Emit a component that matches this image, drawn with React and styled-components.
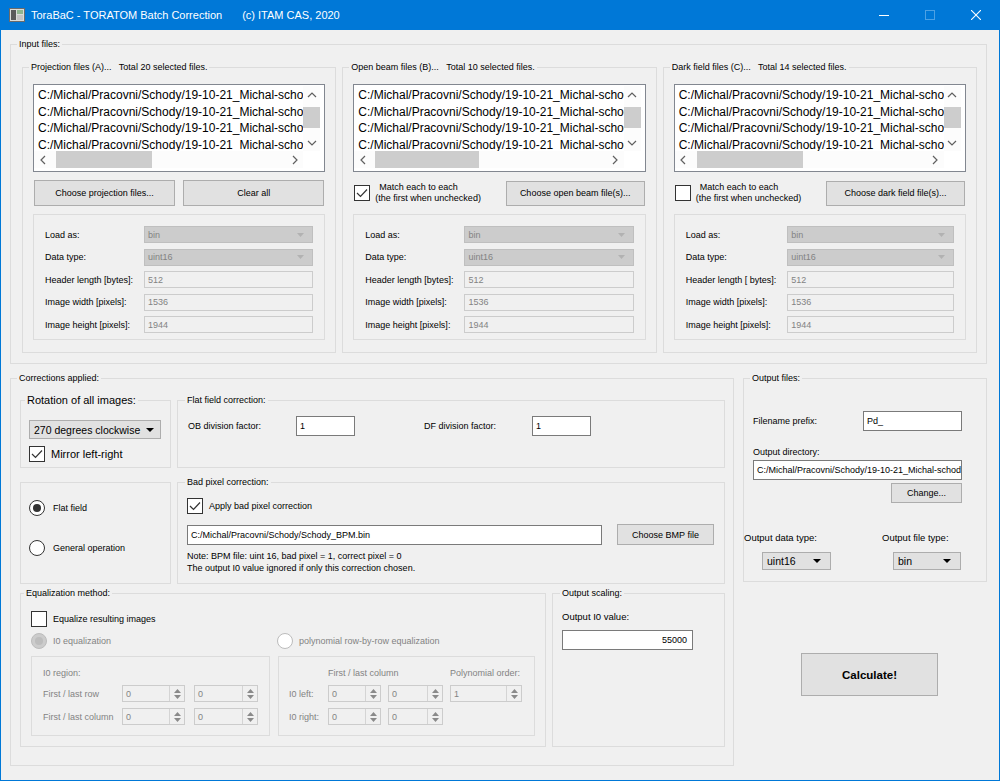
import React from 'react';
import styled, { createGlobalStyle } from 'styled-components';

const GlobalStyle = createGlobalStyle`
  html, body { margin: 0; padding: 0; background: #f0f0f0; }
  body {
    font-family: "Liberation Sans", Arial, sans-serif;
    font-size: 9px;
    line-height: 12px;
    color: #000;
  }
  *, *::before, *::after { box-sizing: border-box; }
`;

const Window = styled.div`
  width: 1000px;
  height: 781px;
  border: 1px solid #0078d7;
  border-top: none;
  background: #f0f0f0;
  display: flex;
  flex-direction: column;
  overflow: hidden;
`;

const TitleBar = styled.div`
  flex: none;
  height: 30px;
  background: #0078d7;
  color: #fff;
  display: flex;
  align-items: center;
  font-size: 11px;
  padding-left: 8px;
`;

const TitleText = styled.span`
  margin-left: ${p => p.$ml}px;
  white-space: nowrap;
`;

const CaptionButtons = styled.div`
  margin-left: auto;
  display: flex;
  align-self: stretch;
`;

const CaptionButton = styled.div`
  width: 46px;
  display: flex;
  align-items: center;
  justify-content: center;
`;

const Content = styled.div`
  padding: 8px 12px 0 9px;
  display: flex;
  flex-direction: column;
`;

const Frame = styled.fieldset`
  margin: 0;
  padding: 0;
  min-width: 0;
  border: 1px solid #dcdcdc;
  flex: ${p => p.$flex || 'none'};
  width: ${p => (p.$w ? `${p.$w}px` : 'auto')};
  display: flex;
  flex-direction: column;
`;

const Legend = styled.legend`
  margin-left: ${p => p.$x - 3}px;
  padding: 0 2px;
  font-size: ${p => p.$size || 9}px;
  line-height: ${p => p.$lh || 12}px;
  white-space: pre;
`;

const GroupBody = styled.div`
  flex: 1;
  min-width: 0;
  padding: ${p => p.$pad};
  display: flex;
  flex-direction: ${p => (p.$row ? 'row' : 'column')};
  gap: ${p => p.$gap || 0}px;
`;

const GroupBox = ({ title, titleX = 9, titleSize, titleLh, w, flex, pad, row, gap, children }) => (
  <Frame $w={w} $flex={flex}>
    <Legend $x={titleX} $size={titleSize} $lh={titleLh}>{title}</Legend>
    <GroupBody $pad={pad} $row={row} $gap={gap}>{children}</GroupBody>
  </Frame>
);

const ListBox = styled.div`
  height: 88px;
  border: 1px solid #828790;
  background: #fff;
  padding: 1px 4px 3px 0;
  display: grid;
  grid-template-columns: minmax(0, 1fr) 17px;
  grid-template-rows: minmax(0, 1fr) 17px;
`;

const ListText = styled.div`
  overflow: hidden;
  min-width: 0;
  padding: 1px 0 0 4px;
  font-size: 12px;
  line-height: 16.5px;
  white-space: nowrap;
`;

const VScroll = styled.div`
  background: #fcfcfc;
  display: flex;
  flex-direction: column;
  align-items: stretch;
`;

const HScroll = styled.div`
  background: #fcfcfc;
  display: flex;
  align-items: stretch;
`;

const ScrollArrow = styled.div`
  flex: none;
  width: 17px;
  height: 17px;
  display: flex;
  align-items: center;
  justify-content: center;
`;

const Track = styled.div`
  flex: 1;
  display: flex;
  flex-direction: ${p => (p.$vertical ? 'column' : 'row')};
`;

const Thumb = styled.div`
  background: #cdcdcd;
  flex: none;
  ${p => (p.$vertical
    ? `margin-top: ${p.$offset}px; height: ${p.$size}px;`
    : `margin-left: ${p.$offset}px; width: ${p.$size}px;`)}
`;

const Chevron = ({ dir }) => {
  const vert = dir === 'up' || dir === 'down';
  const pts = {
    up: '1,5 5,1 9,5',
    down: '1,1 5,5 9,1',
    left: '5,1 1,5 5,9',
    right: '1,1 5,5 1,9',
  }[dir];
  return (
    <svg width={vert ? 10 : 6} height={vert ? 6 : 10} viewBox={vert ? '0 0 10 6' : '0 0 6 10'}>
      <polyline points={pts} fill="none" stroke="#606060" strokeWidth="1.2" />
    </svg>
  );
};

const SubRow = styled.div`
  display: flex;
  align-items: center;
  margin-top: 8px;
  height: 26px;
  gap: 8px;
  padding: 0 1px;
`;

const PushButton = styled.div`
  height: ${p => p.$h || 26}px;
  width: ${p => (p.$w ? `${p.$w}px` : 'auto')};
  flex: ${p => (p.$w ? 'none' : '1')};
  margin-left: ${p => (p.$push ? 'auto' : `${p.$ml || 0}px`)};
  align-self: ${p => p.$self || 'auto'};
  border: 1px solid #adadad;
  background: #e1e1e1;
  display: flex;
  align-items: center;
  justify-content: center;
  font-size: ${p => p.$size || 9}px;
  font-weight: ${p => (p.$bold ? 700 : 400)};
  white-space: nowrap;
`;

const CheckBox = styled.span`
  flex: none;
  width: 16px;
  height: 16px;
  border: 1px solid #333;
  background: #fff;
  display: flex;
  align-items: center;
  justify-content: center;
`;

const Check = ({ checked }) => (
  <CheckBox>
    {checked && (
      <svg width="12" height="10" viewBox="0 0 12 10">
        <polyline points="1,5 4.5,8.5 11,1.5" fill="none" stroke="#333" strokeWidth="1.2" />
      </svg>
    )}
  </CheckBox>
);

const RadioDot = styled.span`
  flex: none;
  width: 16px;
  height: 16px;
  border-radius: 50%;
  border: 1px solid ${p => (p.$disabled ? '#bcbcbc' : '#333')};
  background: ${p => (p.$disabled && p.$checked ? '#cccccc' : '#fff')};
  display: flex;
  align-items: center;
  justify-content: center;
  &::after {
    content: '';
    display: ${p => (p.$checked ? 'block' : 'none')};
    width: 8px;
    height: 8px;
    border-radius: 50%;
    background: ${p => (p.$disabled ? '#bdbdbd' : '#333')};
  }
`;

const OptionRow = styled.div`
  display: flex;
  align-items: center;
  width: ${p => (p.$w ? `${p.$w}px` : 'auto')};
  margin-top: ${p => p.$mt || 0}px;
  color: ${p => (p.$disabled ? '#838383' : '#000')};
  font-size: ${p => p.$size || 9}px;
  white-space: nowrap;
`;

const OptionText = styled.span`
  margin-left: ${p => p.$gap || 6}px;
`;

const MatchText = styled.span`
  margin-left: -3px;
  display: flex;
  flex-direction: column;
  line-height: 11px;
  white-space: nowrap;
`;

const MatchLine = styled.span`
  padding-left: ${p => p.$indent || 0}px;
`;

const ConfigBox = styled.div`
  margin-top: 8px;
  border: 1px solid #dcdcdc;
  padding: 11px 11px 6px 11px;
  display: grid;
  grid-template-columns: auto 1fr;
  column-gap: 11px;
  row-gap: 5.5px;
  grid-auto-rows: 17px;
  align-items: center;
`;

const LineEdit = styled.div`
  flex: none;
  height: ${p => p.$h || 20}px;
  width: ${p => (p.$w ? `${p.$w}px` : 'auto')};
  margin-top: ${p => p.$mt || 0}px;
  border: 1px solid ${p => (p.$disabled ? '#cccccc' : '#7a7a7a')};
  background: ${p => (p.$disabled ? '#f0f0f0' : '#fff')};
  color: ${p => (p.$disabled ? '#838383' : '#000')};
  display: flex;
  align-items: center;
  justify-content: ${p => (p.$right ? 'flex-end' : 'flex-start')};
  padding: 0 ${p => (p.$right ? 5 : 3)}px 0 3px;
  font-size: ${p => p.$size || 9}px;
  white-space: nowrap;
  overflow: hidden;
`;

const ComboBox = styled.div`
  height: ${p => p.$h || 17}px;
  width: ${p => (p.$w ? `${p.$w}px` : 'auto')};
  margin: ${p => p.$margin || '0'};
  border: 1px solid ${p => (p.$disabled ? '#bfbfbf' : '#adadad')};
  background: ${p => (p.$disabled ? '#cccccc' : '#e1e1e1')};
  color: ${p => (p.$disabled ? '#838383' : '#000')};
  display: flex;
  align-items: center;
  padding: 0 ${p => p.$arrowGap || 8}px 0 ${p => p.$pl || 3}px;
  font-size: ${p => p.$size || 9}px;
  white-space: nowrap;
`;

const ArrowSlot = styled.span`
  margin-left: auto;
  padding-left: 4px;
  display: flex;
`;

const DropArrow = ({ color, w = 8, h = 4 }) => (
  <svg width={w} height={h} viewBox={`0 0 ${w} ${h}`}>
    <polygon points={`0,0 ${w},0 ${w / 2},${h}`} fill={color} />
  </svg>
);

const Combo = ({ value, disabled, ...rest }) => (
  <ComboBox $disabled={disabled} {...rest}>
    {value}
    <ArrowSlot>
      {disabled ? <DropArrow color="#b2b2b2" w={7} h={4} /> : <DropArrow color="#000" w={8} h={4} />}
    </ArrowSlot>
  </ComboBox>
);

const SpinBox = styled.div`
  height: 17px;
  border: 1px solid #cccccc;
  background: #f0f0f0;
  color: #838383;
  display: flex;
  align-items: center;
  padding-left: 3px;
`;

const SpinButtons = styled.div`
  margin-left: auto;
  width: 15px;
  align-self: stretch;
  border-left: 1px solid #d4d4d4;
  display: flex;
  flex-direction: column;
  align-items: center;
  justify-content: center;
  gap: 2px;
`;

const Spin = ({ value }) => (
  <SpinBox>
    {value}
    <SpinButtons>
      <svg width="7" height="4" viewBox="0 0 7 4"><polygon points="0,4 7,4 3.5,0" fill="#8a8a8a" /></svg>
      <svg width="7" height="4" viewBox="0 0 7 4"><polygon points="0,0 7,0 3.5,4" fill="#8a8a8a" /></svg>
    </SpinButtons>
  </SpinBox>
);

const BottomRow = styled.div`
  display: flex;
  align-items: flex-start;
  gap: 9px;
  margin-top: 8px;
`;

const Row = styled.div`
  display: flex;
  gap: 6px;
  margin-top: ${p => p.$mt || 0}px;
  align-items: stretch;
`;

const FactorRow = styled.div`
  display: flex;
  align-items: center;
`;

const FactorLabel = styled.span`
  width: 108px;
  margin-left: ${p => p.$ml || 0}px;
  white-space: nowrap;
`;

const RadioPanel = styled.div`
  width: 151px;
  margin-top: 6px;
  border: 1px solid #dcdcdc;
  padding: 17px 0 0 8px;
  display: flex;
  flex-direction: column;
  gap: 24px;
`;

const PathRow = styled.div`
  display: flex;
  align-items: center;
  margin-top: 10px;
`;

const Note = styled.div`
  margin-top: 5px;
  line-height: 12px;
  white-space: nowrap;
`;

const EqualBoxes = styled.div`
  display: flex;
  gap: 8px;
  margin-top: 7px;
`;

const RegionGrid = styled.div`
  flex: ${p => p.$flex || 'none'};
  width: ${p => (p.$w ? `${p.$w}px` : 'auto')};
  border: 1px solid #dcdcdc;
  padding: 10px 11px 10px ${p => p.$pl}px;
  display: grid;
  grid-template-columns: ${p => p.$cols};
  grid-template-rows: 12px 17px 17px;
  column-gap: ${p => p.$gap}px;
  row-gap: 6px;
  align-items: center;
  color: #838383;
  white-space: nowrap;
`;

const GridCell = styled.span`
  grid-column: ${p => p.$col || 'auto'};
`;

const FieldLabel = styled.div`
  margin-top: ${p => p.$mt || 0}px;
  font-size: ${p => p.$size || 9}px;
  white-space: nowrap;
`;

const PrefixRow = styled.div`
  display: flex;
  align-items: center;
`;

const PrefixLabel = styled.span`
  flex: 1;
  font-size: 9px;
`;

const TypeRow = styled.div`
  display: flex;
  margin: 29px 0 0 -9px;
`;

const TypeColumn = styled.div`
  width: ${p => (p.$w ? `${p.$w}px` : 'auto')};
  display: flex;
  flex-direction: column;
`;

const SideColumn = styled.div`
  width: 244px;
  display: flex;
  flex-direction: column;
`;

const fileLine = 'C:/Michal/Pracovni/Schody/19-10-21_Michal-schod';

const inputSets = [
  { title: 'Projection files (A)...', total: 'Total 20 selected files.', thumb: [5, 96], header: 'Header length [bytes]:', kind: 'proj' },
  { title: 'Open beam files (B)...', total: 'Total 10 selected files.', thumb: [4, 104], header: 'Header length [bytes]:', kind: 'ob', checked: true, button: 'Choose open beam file(s)...' },
  { title: 'Dark field files (C)...', total: 'Total 14 selected files.', thumb: [5, 106], header: 'Header length [ bytes]:', kind: 'df', checked: false, button: 'Choose dark field file(s)...' },
];

const AppIcon = () => (
  <svg width="16" height="14" viewBox="0 0 16 14">
    <rect x="0.5" y="0.5" width="15" height="13" fill="#d9dcd9" stroke="#6b6b6b" />
    <rect x="2" y="2" width="5" height="10" fill="#5a5a5a" />
    <rect x="8" y="2" width="6" height="4" fill="#8fb58f" />
    <rect x="8" y="7" width="6" height="5" fill="#c4c4c4" />
  </svg>
);

const FileList = ({ thumb }) => (
  <ListBox>
    <ListText>
      {[0, 1, 2, 3].map(i => (
        <div key={i}>{fileLine}</div>
      ))}
    </ListText>
    <VScroll>
      <ScrollArrow><Chevron dir="up" /></ScrollArrow>
      <Track $vertical>
        <Thumb $vertical $offset={4} $size={21} />
      </Track>
      <ScrollArrow><Chevron dir="down" /></ScrollArrow>
    </VScroll>
    <HScroll>
      <ScrollArrow><Chevron dir="left" /></ScrollArrow>
      <Track>
        <Thumb $offset={thumb[0]} $size={thumb[1]} />
      </Track>
      <ScrollArrow><Chevron dir="right" /></ScrollArrow>
    </HScroll>
    <div />
  </ListBox>
);

const InputSet = ({ set }) => (
  <GroupBox
    title={`${set.title}   ${set.total}`}
    titleX={9}
    flex="1"
    pad="11px 10px 12px 10px"
  >
    <FileList thumb={set.thumb} />
    <SubRow>
      {set.kind === 'proj' ? (
        <>
          <PushButton>Choose projection files...</PushButton>
          <PushButton>Clear all</PushButton>
        </>
      ) : (
        <>
          <Check checked={set.checked} />
          <MatchText>
            <MatchLine $indent={4}>Match each to each</MatchLine>
            <MatchLine>(the first when unchecked)</MatchLine>
          </MatchText>
          <PushButton $w={139} $push $h={25}>{set.button}</PushButton>
        </>
      )}
    </SubRow>
    <ConfigBox>
      <span>Load as:</span>
      <Combo disabled value="bin" />
      <span>Data type:</span>
      <Combo disabled value="uint16" />
      <span>{set.header}</span>
      <LineEdit $disabled $h={17}>512</LineEdit>
      <span>Image width [pixels]:</span>
      <LineEdit $disabled $h={17}>1536</LineEdit>
      <span>Image height [pixels]:</span>
      <LineEdit $disabled $h={17}>1944</LineEdit>
    </ConfigBox>
  </GroupBox>
);

const App = () => (
  <>
    <GlobalStyle />
    <Window>
      <TitleBar>
        <AppIcon />
        <TitleText $ml={6}>ToraBaC - TORATOM Batch Correction</TitleText>
        <TitleText $ml={20}>(c) ITAM CAS, 2020</TitleText>
        <CaptionButtons>
          <CaptionButton>
            <svg width="10" height="10" viewBox="0 0 10 10"><line x1="0" y1="5.5" x2="10" y2="5.5" stroke="#fff" strokeWidth="1" /></svg>
          </CaptionButton>
          <CaptionButton>
            <svg width="10" height="10" viewBox="0 0 10 10"><rect x="0.5" y="0.5" width="9" height="9" fill="none" stroke="#4da1e4" strokeWidth="1" /></svg>
          </CaptionButton>
          <CaptionButton>
            <svg width="10" height="10" viewBox="0 0 10 10">
              <line x1="0" y1="0" x2="10" y2="10" stroke="#fff" strokeWidth="1.1" />
              <line x1="10" y1="0" x2="0" y2="10" stroke="#fff" strokeWidth="1.1" />
            </svg>
          </CaptionButton>
        </CaptionButtons>
      </TitleBar>

      <Content>
        <GroupBox title="Input files:" pad="11px 9px 10px 11px" row gap={6}>
          {inputSets.map(set => (
            <InputSet key={set.kind} set={set} />
          ))}
        </GroupBox>

        <BottomRow>
          <GroupBox title="Corrections applied:" w={724} pad="10px 8px 18px 9px">
            <Row>
              <GroupBox title="Rotation of all images:" titleX={7} titleSize={11} titleLh={13} w={151} pad="13px 0 5px 8px">
                <Combo value="270 degrees clockwise" $w={132} $h={19} $size={10.5} $pl={4} $arrowGap={6} />
                <OptionRow $mt={7} $size={11}>
                  <Check checked />
                  <OptionText>Mirror left-right</OptionText>
                </OptionRow>
              </GroupBox>
              <GroupBox title="Flat field correction:" titleX={10} flex="1" pad="10px 10px 0 10px">
                <FactorRow>
                  <FactorLabel>OB division factor:</FactorLabel>
                  <LineEdit $w={59}>1</LineEdit>
                  <FactorLabel $ml={69}>DF division factor:</FactorLabel>
                  <LineEdit $w={59}>1</LineEdit>
                </FactorRow>
              </GroupBox>
            </Row>

            <Row $mt={8}>
              <RadioPanel>
                <OptionRow>
                  <RadioDot $checked />
                  <OptionText $gap={8}>Flat field</OptionText>
                </OptionRow>
                <OptionRow>
                  <RadioDot />
                  <OptionText $gap={8}>General operation</OptionText>
                </OptionRow>
              </RadioPanel>
              <GroupBox title="Bad pixel correction:" titleX={10} flex="1" pad="10px 10px 9px 9px">
                <OptionRow>
                  <Check checked />
                  <OptionText>Apply bad pixel correction</OptionText>
                </OptionRow>
                <PathRow>
                  <LineEdit $w={415}>C:/Michal/Pracovni/Schody/Schody_BPM.bin</LineEdit>
                  <PushButton $w={97} $h={21} $ml={15}>Choose BMP file</PushButton>
                </PathRow>
                <Note>
                  Note: BPM file: uint 16, bad pixel = 1, correct pixel = 0<br />
                  The output I0 value ignored if only this correction chosen.
                </Note>
              </GroupBox>
            </Row>

            <Row $mt={3}>
              <GroupBox title="Equalization method:" titleX={6} w={526} pad="12px 10px 10px 10px">
                <OptionRow>
                  <Check />
                  <OptionText>Equalize resulting images</OptionText>
                </OptionRow>
                <OptionRow $mt={6}>
                  <OptionRow $w={246} $disabled>
                    <RadioDot $checked $disabled />
                    <OptionText>I0 equalization</OptionText>
                  </OptionRow>
                  <OptionRow $disabled>
                    <RadioDot $disabled />
                    <OptionText>polynomial row-by-row equalization</OptionText>
                  </OptionRow>
                </OptionRow>
                <EqualBoxes>
                  <RegionGrid $w={239} $pl={11} $cols="70px 63px 64px" $gap={9}>
                    <GridCell $col="1 / 4">I0 region:</GridCell>
                    <span>First / last row</span>
                    <Spin value="0" />
                    <Spin value="0" />
                    <span>First / last column</span>
                    <Spin value="0" />
                    <Spin value="0" />
                  </RegionGrid>
                  <RegionGrid $flex="1" $pl={10} $cols="32px 53px 55px 72px" $gap={7}>
                    <GridCell $col="2 / 4">First / last column</GridCell>
                    <GridCell $col="4">Polynomial order:</GridCell>
                    <span>I0 left:</span>
                    <Spin value="0" />
                    <Spin value="0" />
                    <Spin value="1" />
                    <span>I0 right:</span>
                    <Spin value="0" />
                    <Spin value="0" />
                  </RegionGrid>
                </EqualBoxes>
              </GroupBox>
              <GroupBox title="Output scaling:" titleX={10} flex="1" pad="12px 9px 0 9px">
                <FieldLabel $size={9.5}>Output I0 value:</FieldLabel>
                <LineEdit $w={131} $mt={7} $right>55000</LineEdit>
              </GroupBox>
            </Row>
          </GroupBox>

          <SideColumn>
            <GroupBox title="Output files:" pad="27px 24px 11px 9px">
              <PrefixRow>
                <PrefixLabel>Filename prefix:</PrefixLabel>
                <LineEdit $w={99}>Pd_</LineEdit>
              </PrefixRow>
              <FieldLabel $mt={15}>Output directory:</FieldLabel>
              <LineEdit $mt={2}>C:/Michal/Pracovni/Schody/19-10-21_Michal-schody</LineEdit>
              <PushButton $w={71} $h={20} $self="flex-end" style={{ marginTop: 3 }}>Change...</PushButton>
              <TypeRow>
                <TypeColumn $w={138}>
                  <FieldLabel $size={9.5}>Output data type:</FieldLabel>
                  <Combo value="uint16" $w={69} $h={18} $size={10.5} $pl={4} $arrowGap={9} $margin="8px 0 0 18px" />
                </TypeColumn>
                <TypeColumn>
                  <FieldLabel $size={9.5}>Output file type:</FieldLabel>
                  <Combo value="bin" $w={68} $h={18} $size={10.5} $pl={4} $arrowGap={9} $margin="8px 0 0 11px" />
                </TypeColumn>
              </TypeRow>
            </GroupBox>
            <PushButton $w={137} $h={43} $bold $size={11.5} style={{ marginTop: 71, marginLeft: 58 }}>
              Calculate!
            </PushButton>
          </SideColumn>
        </BottomRow>
      </Content>
    </Window>
  </>
);

export default App;
